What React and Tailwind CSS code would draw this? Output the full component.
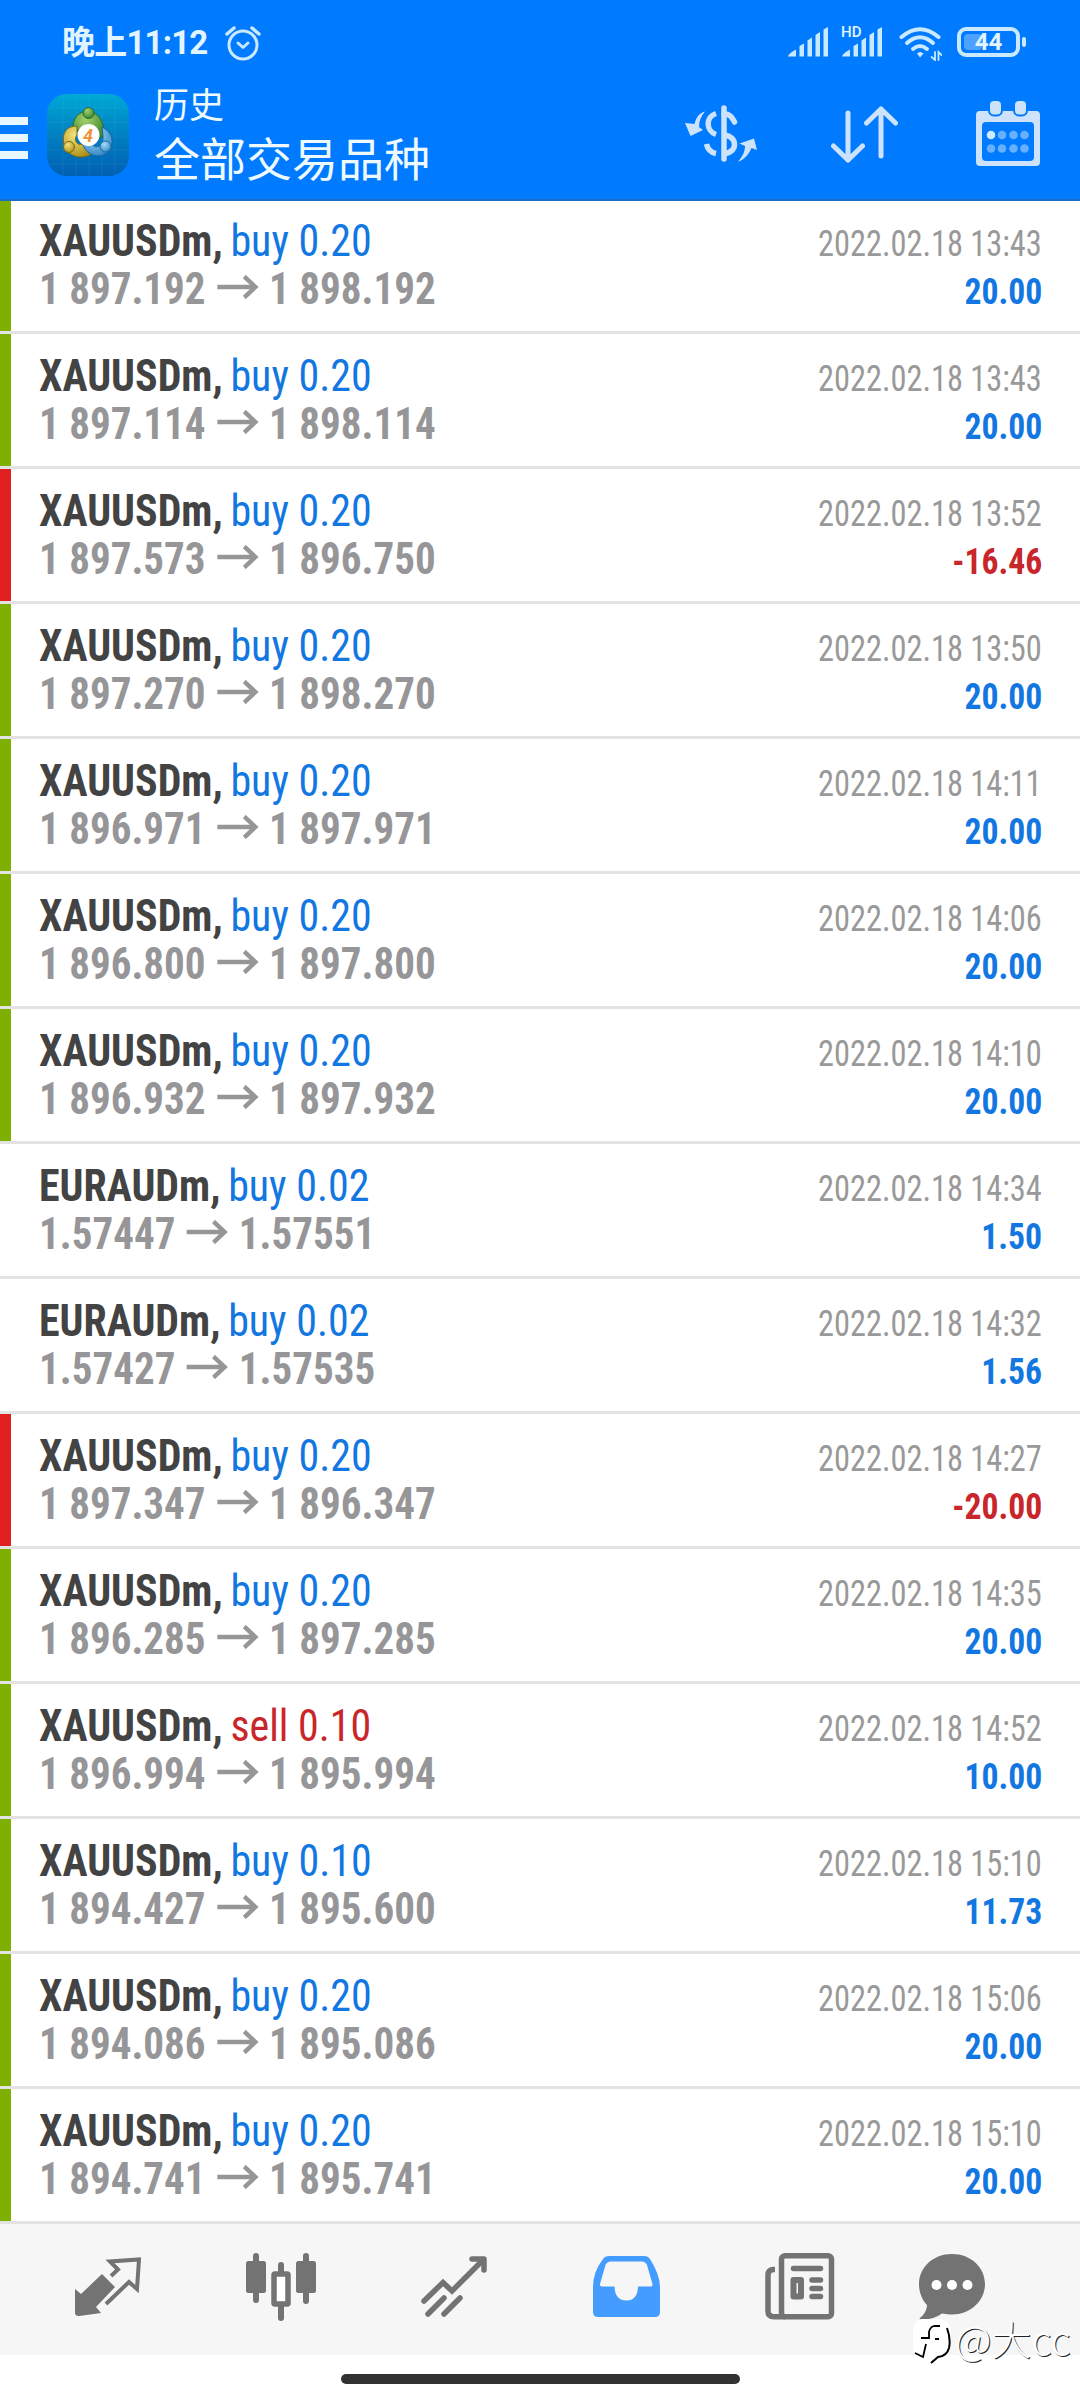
import React from "react";

const history = [
    { symbol: "XAUUSDm", side: "buy", lots: "0.20", open: "1 897.192", close: "1 898.192", time: "2022.02.18 13:43", profit: "20.00", mark: "tp" },
    { symbol: "XAUUSDm", side: "buy", lots: "0.20", open: "1 897.114", close: "1 898.114", time: "2022.02.18 13:43", profit: "20.00", mark: "tp" },
    { symbol: "XAUUSDm", side: "buy", lots: "0.20", open: "1 897.573", close: "1 896.750", time: "2022.02.18 13:52", profit: "-16.46", mark: "sl" },
    { symbol: "XAUUSDm", side: "buy", lots: "0.20", open: "1 897.270", close: "1 898.270", time: "2022.02.18 13:50", profit: "20.00", mark: "tp" },
    { symbol: "XAUUSDm", side: "buy", lots: "0.20", open: "1 896.971", close: "1 897.971", time: "2022.02.18 14:11", profit: "20.00", mark: "tp" },
    { symbol: "XAUUSDm", side: "buy", lots: "0.20", open: "1 896.800", close: "1 897.800", time: "2022.02.18 14:06", profit: "20.00", mark: "tp" },
    { symbol: "XAUUSDm", side: "buy", lots: "0.20", open: "1 896.932", close: "1 897.932", time: "2022.02.18 14:10", profit: "20.00", mark: "tp" },
    { symbol: "EURAUDm", side: "buy", lots: "0.02", open: "1.57447", close: "1.57551", time: "2022.02.18 14:34", profit: "1.50", mark: "" },
    { symbol: "EURAUDm", side: "buy", lots: "0.02", open: "1.57427", close: "1.57535", time: "2022.02.18 14:32", profit: "1.56", mark: "" },
    { symbol: "XAUUSDm", side: "buy", lots: "0.20", open: "1 897.347", close: "1 896.347", time: "2022.02.18 14:27", profit: "-20.00", mark: "sl" },
    { symbol: "XAUUSDm", side: "buy", lots: "0.20", open: "1 896.285", close: "1 897.285", time: "2022.02.18 14:35", profit: "20.00", mark: "tp" },
    { symbol: "XAUUSDm", side: "sell", lots: "0.10", open: "1 896.994", close: "1 895.994", time: "2022.02.18 14:52", profit: "10.00", mark: "tp" },
    { symbol: "XAUUSDm", side: "buy", lots: "0.10", open: "1 894.427", close: "1 895.600", time: "2022.02.18 15:10", profit: "11.73", mark: "tp" },
    { symbol: "XAUUSDm", side: "buy", lots: "0.20", open: "1 894.086", close: "1 895.086", time: "2022.02.18 15:06", profit: "20.00", mark: "tp" },
    { symbol: "XAUUSDm", side: "buy", lots: "0.20", open: "1 894.741", close: "1 895.741", time: "2022.02.18 15:10", profit: "20.00", mark: "tp" },
];

const markColors = {
    tp: "bg-[#7fb000]",
    sl: "bg-[#e02020]",
    "": "bg-white",
};

function Signal() {
    return (
        <svg className="w-[41px] h-[30px]" viewBox="0 0 41 30" fill="#c8e9ff">
            <path d="M0 29.500Q0 27 8 22.500V29.500Z" />
            <path d="M11.500 19 16 16.500V29.500H11.500Z" />
            <path d="M19.500 13.500 24 10.500V29.500H19.500Z" />
            <path d="M27.500 8 32 5V29.500H27.500Z" />
            <path d="M35.500 2.500 40 0V29.500H35.500Z" />
        </svg>
    );
}

function StatusBar() {
    return (
        <div className="h-[84px] pl-[62px] pr-[54px] flex items-center justify-between text-[#e2f5ff]">
            <div className="flex items-center pt-px">
                <span className="text-[33px] leading-[40px] tracking-[-0.8px] font-bold font-[Roboto,'Noto_Sans_CJK_SC',sans-serif]">
                    晚上11:12
                </span>
                <svg className="ml-[18px] w-[36px] h-[36px]" viewBox="0 0 36 36" fill="none" stroke="#c8e9ff" strokeWidth="3" strokeLinecap="round" strokeLinejoin="round">
                    <circle cx="18" cy="20" r="14" />
                    <path d="M13 18 18 22.500 23 18" />
                    <path d="M2 9 9 3M34 9 27 3" strokeWidth="3.500" />
                </svg>
            </div>
            <div className="flex items-center">
                <Signal />
                <div className="relative ml-[13px]">
                    <Signal />
                    <span className="absolute -left-px -top-[4px] text-[15px] leading-[18px] font-medium font-[Roboto,sans-serif]">
                        HD
                    </span>
                </div>
                <svg className="ml-[16px] w-[43px] h-[34px] mt-1" viewBox="0 0 43 34" fill="none" stroke="#c8e9ff" strokeWidth="4" strokeLinecap="round">
                    <path d="M2.500 10Q21 -5.500 39.500 10" />
                    <path d="M8 16Q21 4.500 34 16" />
                    <path d="M14 22Q21 16 28 22" />
                    <path d="M18 26.500 21 30.500 24.500 26.500Q21 23.500 18 26.500Z" fill="#c8e9ff" stroke="none" />
                    <path d="M36 25V33L32.500 30M39.500 33V25L42.500 28" strokeWidth="1.800" />
                </svg>
                <div className="ml-[15px] w-[63px] h-[30px] relative border-4 border-[#c8e9ff] rounded-[9px] flex items-center justify-center">
                    <div className="absolute left-[3px] top-[3px] w-[18px] h-4 rounded-sm bg-[#4da2ff]" />
                    <span className="relative text-[24px] leading-6 font-bold font-[Roboto,sans-serif]">44</span>
                </div>
                <div className="ml-[2px] w-1 h-[10px] rounded-full bg-[#c8e9ff]" />
            </div>
        </div>
    );
}

function AppLogo() {
    return (
        <svg className="w-[82px] h-[82px]" viewBox="0 0 82 82">
            <defs>
                <linearGradient id="tile" x1="0" y1="0" x2="0" y2="1">
                    <stop offset="0" stopColor="#00a9d6" />
                    <stop offset="0.5" stopColor="#007fc0" />
                    <stop offset="1" stopColor="#0060b4" />
                </linearGradient>
                <radialGradient id="green" cx="0.4" cy="0.3" r="0.8">
                    <stop offset="0" stopColor="#a5d06c" />
                    <stop offset="1" stopColor="#2c7d2a" />
                </radialGradient>
                <radialGradient id="gold" cx="0.4" cy="0.3" r="0.8">
                    <stop offset="0" stopColor="#f5e27a" />
                    <stop offset="1" stopColor="#a88a12" />
                </radialGradient>
                <radialGradient id="sky" cx="0.4" cy="0.3" r="0.8">
                    <stop offset="0" stopColor="#a8dcf8" />
                    <stop offset="1" stopColor="#2680c0" />
                </radialGradient>
            </defs>
            <rect width="82" height="82" rx="20" fill="url(#tile)" />
            <path d="M16 0V82M29 0V82M42 0V82M55 0V82M68 0V82M0 14H82M0 28H82M0 42H82M0 56H82M0 70H82" stroke="#fff" strokeOpacity="0.060" />
            <path d="M26 36C24 10 59 10 57 42L48 46C47 28 38 28 33 36Z" fill="url(#green)" stroke="#256b2b" />
            <path d="M30 32C15 32 14 46 19 56C25 64 38 65 44 60L36 50C30 52 26 46 30 41Z" fill="url(#gold)" stroke="#7a6b12" />
            <path d="M55 33C66 38 68 50 61 58C52 66 38 61 35 48L45 50C49 56 57 52 56 42Z" fill="url(#sky)" stroke="#1d68a0" />
            <circle cx="41.500" cy="19" r="5.500" fill="url(#green)" stroke="#256b2b" />
            <circle cx="22" cy="53" r="5.500" fill="url(#gold)" stroke="#7a6b12" />
            <circle cx="58.500" cy="52.500" r="5.500" fill="url(#sky)" stroke="#1d68a0" />
            <circle cx="41.500" cy="41" r="11" fill="#fff" />
            <text x="41" y="47.500" textAnchor="middle" fontSize="18" fontWeight="700" fontFamily="Roboto" fontStyle="italic" fill="#f0923c">4</text>
        </svg>
    );
}

function Toolbar() {
    return (
        <div className="flex-1 flex items-start">
            <div className="mt-[33px] flex flex-col gap-[9px]">
                <div className="w-7 h-2 bg-[#e6f7ff]" />
                <div className="w-7 h-2 bg-[#e6f7ff]" />
                <div className="w-7 h-2 bg-[#e6f7ff]" />
            </div>
            <div className="ml-[19px] mt-[10px]">
                <AppLogo />
            </div>
            <div className="ml-[25px] -mt-0.5 flex flex-col text-[#eefaff] font-['Noto_Sans_CJK_SC',sans-serif]">
                <span className="text-[35px] leading-[42px]">历史</span>
                <span className="text-[46px] leading-[56px] mt-[4px]">全部交易品种</span>
            </div>
            <svg className="ml-auto mt-[21px] w-[72px] h-[57px]" viewBox="0 0 72 57" fill="none" stroke="#cde3fb" strokeWidth="5.500">
                <path d="M39 3V54" strokeLinecap="round" />
                <path d="M31 8.500C20 12 21 26 31 29.500" />
                <path d="M39 9C46 9 47 13 49.500 17" strokeLinecap="round" />
                <path d="M39 30C53 31 53 48 39 48.500" />
                <path d="M21.500 39C22.500 44 26 47.500 31 48.500" />
                <path d="M20 6.500C14 8 11 13 9.500 19L0 18 5.500 31 18 25 14 22C14 16 16 11 20 6.500Z" fill="#cde3fb" stroke="none" />
                <path d="M53 57C60 54 64 49 66.500 43L72 45 69 33.500 54.500 38.500 60 41C60 47 57 52 53 57Z" fill="#cde3fb" stroke="none" />
            </svg>
            <svg className="ml-[74px] mt-[21px] w-[67px] h-[59px]" viewBox="0 0 67 59" fill="none" stroke="#cde3fb" strokeWidth="5" strokeLinecap="round" strokeLinejoin="round">
                <path d="M17 8V55M2.500 41 17 55 31.500 41" />
                <path d="M50 51V4M35.500 18 50 4 64.500 18" />
            </svg>
            <svg className="ml-[78px] mr-[40px] mt-[17px] w-[64px] h-[65px]" viewBox="0 0 64 65">
                <path fillRule="evenodd" fill="#cde3fb" d="M4 10H60Q64 10 64 14V61Q64 65 60 65H4Q0 65 0 61V14Q0 10 4 10ZM10 21Q6 21 6 25V56Q6 60 10 60H54Q58 60 58 56V25Q58 21 54 21Z" />
                <rect x="13" y="-1" width="13" height="15.500" rx="5" fill="#cde3fb" stroke="#007aff" strokeWidth="2" />
                <rect x="38" y="-1" width="13" height="15.500" rx="5" fill="#cde3fb" stroke="#007aff" strokeWidth="2" />
                <g fill="#66b0ff">
                    <circle cx="15" cy="34" r="4.300" fill="#cde9ff" />
                    <circle cx="26" cy="34" r="4.300" />
                    <circle cx="37.500" cy="34" r="4.300" />
                    <circle cx="48.500" cy="34" r="4.300" />
                    <circle cx="15" cy="47.500" r="4.300" />
                    <circle cx="26" cy="47.500" r="4.300" />
                    <circle cx="37.500" cy="47.500" r="4.300" />
                    <circle cx="48.500" cy="47.500" r="4.300" />
                </g>
            </svg>
        </div>
    );
}

function Deal({ deal }) {
    const loss = deal.profit.startsWith("-");
    return (
        <div className="h-[135px] flex border-b-3 border-[#e3e3e3]">
            <div className={`w-[11px] ${markColors[deal.mark]}`} />
            <div className="flex-1 pl-[28px] pr-[38px] pt-[18px] font-['Roboto_Condensed',Roboto,sans-serif] font-stretch-condensed">
                <div className="h-12 flex items-baseline justify-between text-[44px] leading-[48px] whitespace-nowrap">
                    <div className="origin-left scale-x-[0.953]">
                        <span className="font-bold text-[#434343]">{deal.symbol},</span>{" "}
                        <span className={deal.side === "sell" ? "-ml-[2px] text-[#c8262a]" : "-ml-[2px] text-[#1277e1]"}>
                            {deal.side} {deal.lots}
                        </span>
                    </div>
                    <div className="origin-right scale-x-[0.875] text-[37px] text-[#999999]">{deal.time}</div>
                </div>
                <div className="h-12 flex items-baseline justify-between text-[44px] leading-[48px] whitespace-nowrap font-bold">
                    <div className="flex items-baseline text-[#969699] origin-left scale-x-[0.933]">
                        <span>{deal.open}</span>
                        <svg className="ml-[12px] mr-[11px] -mt-1 w-[45px] h-6 self-center" viewBox="0 0 45 24" fill="none" stroke="#969699" strokeWidth="4.500">
                            <path d="M0 12H41M29 1.500 41 12 29 22.500" />
                        </svg>
                        <span>{deal.close}</span>
                    </div>
                    <div className={loss ? "origin-right scale-x-[0.935] text-[36px] text-[#c8262a]" : "origin-right scale-x-[0.935] text-[36px] text-[#1277e1]"}>
                        {deal.profit}
                    </div>
                </div>
            </div>
        </div>
    );
}

function BottomNav() {
    return (
        <div className="h-[131px] bg-[#f6f6f6] pl-[21px] flex items-center pb-[6px]">
            <div className="w-[173px] flex justify-center">
                <svg className="w-[66px] h-[59px]" viewBox="0 0 66 59" fill="#737373">
                    <path d="M27 17 40 30 21 50 26 56 4 59Q0 59 0 56V32L6 37Z" />
                    <path d="M36 19 43 12.500 35 4.500 64 2.500 62 32 54 25 31 47" fill="none" stroke="#737373" strokeWidth="4" />
                </svg>
            </div>
            <div className="w-[173px] flex justify-center">
                <svg className="w-[70px] h-[68px]" viewBox="0 0 70 68" fill="#737373">
                    <rect x="7" width="6" height="50" rx="3" />
                    <rect y="8" width="20" height="32" rx="2.500" />
                    <rect x="57" width="6" height="51" rx="3" />
                    <rect x="50" y="8" width="20" height="32" rx="2.500" />
                    <rect x="32" y="9" width="6" height="12" rx="3" />
                    <rect x="32" y="50" width="6" height="18" rx="3" />
                    <rect x="28" y="21" width="14" height="30" rx="1" fill="#fff" stroke="#737373" strokeWidth="5.500" />
                </svg>
            </div>
            <div className="w-[173px] flex justify-center">
                <svg className="w-[66px] h-[61px]" viewBox="0 0 66 61" fill="none" stroke="#737373" strokeWidth="5.500" strokeLinecap="round">
                    <path d="M3 45 22 26.500 31 35 61 5" />
                    <path d="M51 3H63V14" strokeLinejoin="round" />
                    <path d="M7 58 23 42M23 58 39 42" />
                </svg>
            </div>
            <div className="w-[173px] flex justify-center">
                <svg className="w-[67px] h-[61px]" viewBox="0 0 67 61" fill="#459cff">
                    <path fillRule="evenodd" d="M16 0H51Q55 0 57 3 67 19 67 31V56Q67 61 62 61H5Q0 61 0 56V31Q0 16 10 3 12 0 16 0ZM18 5.500Q14 5.500 12.500 9L7 28Q6.500 30.500 9 30.500H21.500Q22 44.500 33.500 44.500 44.500 44.500 45 30.500H57Q60 30.500 59.500 28L54 9Q52.500 5.500 49 5.500Z" />
                </svg>
            </div>
            <div className="w-[173px] flex justify-center">
                <svg className="w-[70px] h-[67px]" viewBox="0 0 70 67" fill="none" stroke="#737373" strokeWidth="5.500">
                    <rect x="16.500" y="2.750" width="50" height="61" rx="3.500" />
                    <path d="M10 16.500H8Q3 17 3 22V58Q3 63.800 9 63.800H20" />
                    <path d="M28.500 15.500H55.500M47 27H55.500M47 35.500H55.500M47 43.500H55.500" strokeLinecap="round" />
                    <rect x="28.500" y="27" width="7.500" height="16.500" strokeWidth="6" strokeLinejoin="round" />
                </svg>
            </div>
            <div className="w-[132px] flex justify-center">
                <svg className="w-[66px] h-[66px]" viewBox="0 0 66 66">
                    <path d="M33 0C52 0 66 13.500 66 30S52 60.500 33 60.500Q28 60.500 23 59.500 14 66 2 66 0 66 1 64 8 58 8 51C3 46 0 38 0 30 0 13.500 14 0 33 0Z" fill="#737373" />
                    <circle cx="17.500" cy="31" r="5" fill="#fff" />
                    <circle cx="33" cy="31" r="5" fill="#fff" />
                    <circle cx="48.500" cy="31" r="5" fill="#fff" />
                </svg>
            </div>
        </div>
    );
}

function Watermark() {
    return (
        <div className="absolute left-[913px] top-[2311px] flex items-center">
            <svg className="w-[38px] h-[46px] mt-2" viewBox="0 0 38 46">
                <path d="M8 0H28Q38 2 38 14V26Q37 38 27 39L18 44 17 39H8Q0 37 0 26V12Q1 2 8 0Z" fill="#fff" />
                <path d="M34 9Q38 20 36 29 34 37 25 38L18 44" fill="none" stroke="#000" strokeWidth="2" />
                <path d="M27 7H21Q17 8 16 13V19H8M22 20H26M2 34 10 38 13 25" fill="none" stroke="#000" strokeWidth="1.800" />
            </svg>
            <span className="ml-[4px] text-[40px] leading-[48px] text-white font-light font-['Noto_Sans_CJK_SC',sans-serif] [text-shadow:1px_1px_0_#222]">
                @大cc
            </span>
        </div>
    );
}

export default function App() {
    return (
        <div className="relative w-[1080px] h-[2400px] bg-white overflow-hidden flex flex-col">
            <header className="relative z-10 h-[201px] shrink-0 bg-[#007aff] border-b-2 border-[#1a6fc4] flex flex-col">
                <StatusBar />
                <Toolbar />
            </header>
            <main className="-mt-0.5 shrink-0">
                {history.map((deal, i) => (
                    <Deal key={i} deal={deal} />
                ))}
            </main>
            <BottomNav />
            <div className="flex-1 flex justify-center items-start pt-[19px]">
                <div className="w-[399px] h-[10px] rounded-full bg-[#323232]" />
            </div>
            <Watermark />
        </div>
    );
}
